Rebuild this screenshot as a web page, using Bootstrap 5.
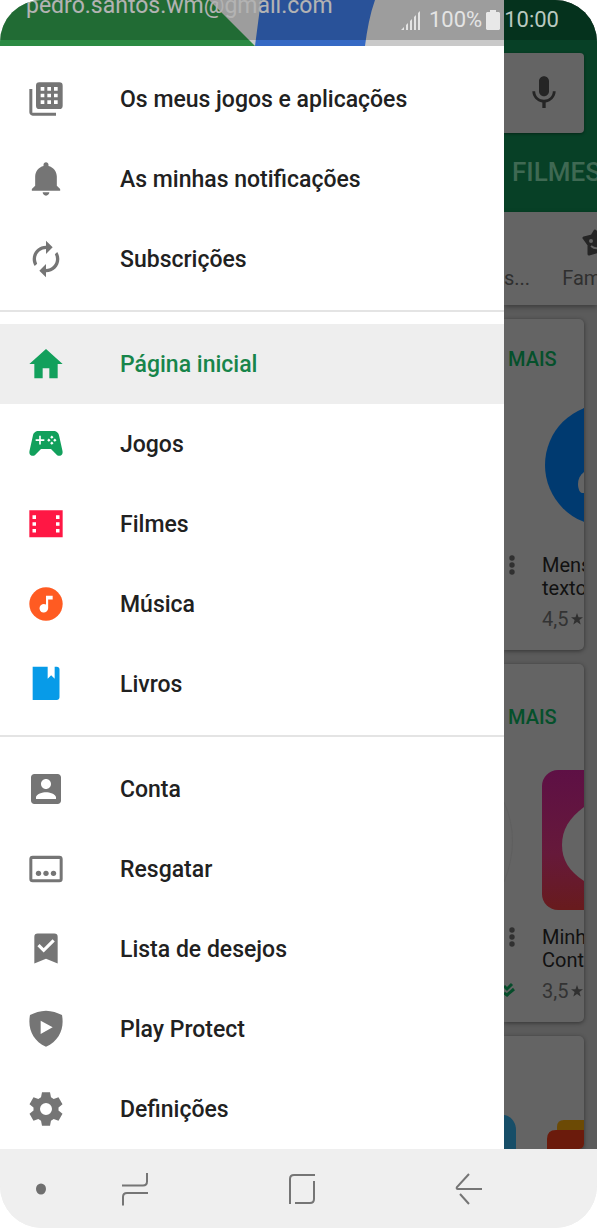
<!DOCTYPE html>
<html lang="pt">
<head>
<meta charset="utf-8">
<meta name="viewport" content="width=device-width, initial-scale=1">
<title>Menu da loja</title>
<link href="https://cdn.jsdelivr.net/npm/bootstrap@5.3.0/dist/css/bootstrap.min.css" rel="stylesheet">
<style>
  body { font-family: Roboto, "Liberation Sans", sans-serif; background: #fff; }
  .phone { border-radius: 42px; background: #efefef; }
  .status-bar { height: 40px; padding-right: 38px; background: rgba(0,0,0,.22); color: #e4e4e4; font-size: 22px; line-height: 40px; z-index: 3; }
  .status-bar time { color: #b9c9c0; }

  /* Navigation drawer */
  .drawer { background: #fff; min-width: 0; }
  .account { height: 46px; padding-left: 26px; }
  .account-art { inset: 0; }
  .account-mail { font-size: 23px; line-height: 12px; color: #e6e6e6; }
  .menu-group { padding: 0; margin: 0; list-style: none; }
  .menu-first { padding-top: 13px; }
  .menu-item { height: 80px; padding-left: 26px; gap: 54px; color: #212121; font-size: 23px; font-weight: 500; line-height: 32px; }
  .menu-item span { padding-top: 2px; }
  .menu-item.current { background: #eee; color: #17854a; }
  .menu-item svg { width: 40px; height: 40px; fill: #757575; flex: none; }
  .rule { height: 2px; background: #e4e4e4; margin: 11px 0 12px; }

  /* Dimmed store page beside the drawer */
  .store { width: 93px; background: #5b5b5b; color: #111; }
  .store-top { height: 212px; padding-top: 53px; background: #074026; }
  .search-end { width: 80px; height: 80px; background: #646464; border-radius: 0 4px 4px 0; box-shadow: 0 1px 3px rgba(0,0,0,.4); border: 0; padding: 0; }
  .store-tab { padding-left: 8px; font-size: 26px; font-weight: 500; line-height: 78px; color: #3f6953; text-decoration: none; }
  .shelf { height: 93px; background: #646464; color: #2f2f2f; font-size: 20px; line-height: 28px; box-shadow: 0 2px 5px rgba(0,0,0,.35); padding-top: 14px; gap: 32px; }
  .shelf a { padding-top: 38px; }
  .shelf a.with-icon { padding-top: 0; }
  .with-icon svg { display: block; margin: 0 0 6px 18px; }
  .tile { width: 80px; margin-top: 14px; background: #646464; border-radius: 0 5px 5px 0; box-shadow: 0 1px 4px rgba(0,0,0,.45); }
  .more { height: 79px; padding-left: 4px; font-size: 20px; font-weight: 500; color: #05502b; text-decoration: none; }
  .more-tall { height: 106px; }
  .tile-text { padding: 16px 0 19px; font-size: 20px; line-height: 23px; }
  .tile-side { width: 38px; flex: none; }
  .dots { border: 0; padding: 0 0 0 4px; background: none; line-height: 0; display: block; }
  .rating { padding-top: 7px; line-height: 24px; color: #333; gap: 3px; }

  /* System keys */
  .keys { height: 79px; background: #efefef; padding: 0 45px 0 36px; }
  .keys button { border: 0; background: none; padding: 0; line-height: 0; }
  .keys .pin { margin-right: 5px; }
  .keys svg { fill: none; stroke: #757575; stroke-width: 2; }
</style>
</head>
<body>
<div class="phone position-relative overflow-hidden d-flex flex-column min-vh-100">

  <div class="status-bar position-absolute top-0 start-0 end-0 d-flex align-items-center justify-content-end">
    <svg width="20" height="20" viewBox="0 0 20 20" fill="#e4e4e4"><path d="M0 20l3-3v3zM5 15l2-2v7H5zM9 11l2-2v11H9zM13 7l2-2v15h-2zM17 3l2-2v19h-2z"/></svg>
    <span class="ms-2 me-1">100%</span>
    <svg width="14" height="20" viewBox="0 0 14 20" fill="#e8e8e8"><path d="M4 0h6v2h3l1 1v16l-1 1H1l-1-1V3l1-1h3z"/></svg>
    <time class="ps-1">10:00</time>
  </div>

  <div class="d-flex flex-fill">
    <nav class="drawer flex-fill">
      <div class="account position-relative overflow-hidden">
        <svg class="account-art position-absolute w-100 h-100" viewBox="0 0 504 46" preserveAspectRatio="none">
          <path fill="#c9c9c9" d="M0 0h504v46H0z"/><path fill="#2b8a43" d="M0 0h209l46 46H0z"/><path fill="#3569c4" d="M261 0h114c-5 14-8 30-10 46H255z"/>
        </svg>
        <div class="account-mail position-relative">pedro.santos.wm@gmail.com</div>
      </div>

      <ul class="menu-group menu-first">
        <li><a href="#" class="menu-item d-flex align-items-center text-decoration-none">
          <svg viewBox="0 0 24 24"><path d="M3.800 6H2v14c0 1.100.9 2 2 2h14v-1.800H3.800z"/><path fill-rule="evenodd" d="M8 2h12a2 2 0 0 1 2 2v12a2 2 0 0 1-2 2H8a2 2 0 0 1-2-2V4a2 2 0 0 1 2-2zM8.800 4.800V7H11V4.800zm4 0V7H15V4.800zm4 0V7H19V4.800zM8.800 8.800V11H11V8.800zm4 0V11H15V8.800zm4 0V11H19V8.800zM8.800 12.800V15H11v-2.200zm4 0V15H15v-2.200zm4 0V15H19v-2.200z"/></svg><span>Os meus jogos e aplicações</span></a></li>
        <li><a href="#" class="menu-item d-flex align-items-center text-decoration-none">
          <svg viewBox="-.5 0 24 24"><path d="M11.500 22c1.100 0 2-.9 2-2h-4c0 1.100.9 2 2 2zm6.500-6v-5.500c0-3.070-2.130-5.640-5-6.320V3.500c0-.83-.67-1.500-1.500-1.500S10 2.670 10 3.500v.68c-2.870.68-5 3.250-5 6.320V16l-2 2v1h17v-1l-2-2z"/></svg><span>As minhas notificações</span></a></li>
        <li><a href="#" class="menu-item d-flex align-items-center text-decoration-none">
          <svg viewBox="0 0 24 24"><path d="M12 6v3l4-4-4-4v3c-4.420 0-8 3.580-8 8 0 1.570.46 3.030 1.240 4.260L6.700 14.800A5.870 5.870 0 0 1 6 12c0-3.310 2.690-6 6-6zm6.760 1.740L17.300 9.200c.44.84.7 1.790.7 2.800 0 3.310-2.690 6-6 6v-3l-4 4 4 4v-3c4.420 0 8-3.580 8-8 0-1.570-.46-3.030-1.240-4.260z"/></svg><span>Subscrições</span></a></li>
      </ul>
      <div class="rule"></div>
      <ul class="menu-group">
        <li><a href="#" class="menu-item current d-flex align-items-center text-decoration-none" aria-current="page">
          <svg viewBox="0 0 24 24"><path fill="#12a05c" d="M10 20.500V14.500h4v6h5v-8.500h3L12 3 2 12h3v8.500z"/></svg><span>Página inicial</span></a></li>
        <li><a href="#" class="menu-item d-flex align-items-center text-decoration-none">
          <svg viewBox="0 0 24 24"><path fill="#12a05c" d="M7.600 4.200h8.800c1.900 0 3.300 1.200 3.500 3l2 9c.3 1.600-.4 2.900-2 2.900-.8 0-1.200-.3-1.800-.9L15 15H9l-3.100 3.200c-.6.600-1 .9-1.800.9-1.600 0-2.300-1.300-2-2.900l2-9c.2-1.800 1.600-3 3.500-3z"/><path fill="#fff" d="M7.900 7.100h1v2.100H11v1H8.900v2.100h-1v-2.100H5.800v-1h2.100zM15.500 6.900l1 1-1 1-1-1zM15.500 10.500l1 1-1 1-1-1zM13.700 8.700l1 1-1 1-1-1zM17.300 8.700l1 1-1 1-1-1z"/></svg><span>Jogos</span></a></li>
        <li><a href="#" class="menu-item d-flex align-items-center text-decoration-none">
          <svg viewBox="0 0 24 24"><path fill="#ff1744" d="M2 3.700h20V20H2z"/><path fill="#fff" d="M3.900 6.800H6V9H3.900zM3.900 10.900H6V13H3.900zM3.900 15H6v2.100H3.900zM18 6.800h2.100V9H18zM18 10.900h2.100V13H18zM18 15h2.100v2.100H18z"/></svg><span>Filmes</span></a></li>
        <li><a href="#" class="menu-item d-flex align-items-center text-decoration-none">
          <svg viewBox="0 0 24 24"><circle fill="#ff5b22" cx="12" cy="12" r="10"/><path fill="#fff" d="M12 7h4v2.300h-2.700v5.300a2.600 2.600 0 1 1-1.300-2.300z"/></svg><span>Música</span></a></li>
        <li><a href="#" class="menu-item d-flex align-items-center text-decoration-none">
          <svg viewBox="0 0 24 24"><path fill="#079be8" d="M4 1.600h9v7.200l2.100-2.100 2.100 2.100V1.600h1.300c.9 0 1.600.7 1.600 1.600v16.800c0 .9-.7 1.600-1.600 1.600H4z"/></svg><span>Livros</span></a></li>
      </ul>
      <div class="rule"></div>
      <ul class="menu-group">
        <li><a href="#" class="menu-item d-flex align-items-center text-decoration-none">
          <svg viewBox="0 0 24 24"><path d="M3 5v14c0 1.100.89 2 2 2h14c1.100 0 2-.9 2-2V5c0-1.100-.9-2-2-2H5c-1.110 0-2 .9-2 2zm12 4c0 1.660-1.340 3-3 3s-3-1.340-3-3 1.340-3 3-3 3 1.340 3 3zm-9 8c0-2 4-3.100 6-3.100s6 1.100 6 3.100v1H6v-1z"/></svg><span>Conta</span></a></li>
        <li><a href="#" class="menu-item d-flex align-items-center text-decoration-none">
          <svg viewBox="0 0 24 24"><path fill-rule="evenodd" d="M4 4h16a2 2 0 0 1 2 2v12a2 2 0 0 1-2 2H4a2 2 0 0 1-2-2V6a2 2 0 0 1 2-2zm-.2 2v12.200h16.400V6z"/><circle cx="7.500" cy="14.600" r="1.600"/><circle cx="12" cy="14.600" r="1.600"/><circle cx="16.500" cy="14.600" r="1.600"/></svg><span>Resgatar</span></a></li>
        <li><a href="#" class="menu-item d-flex align-items-center text-decoration-none">
          <svg viewBox="0 0 24 24"><path d="M7 2.700h10a2 2 0 0 1 2 2v16l-7-2.900-7 2.900v-16a2 2 0 0 1 2-2z"/><path fill="none" stroke="#fff" stroke-width="1.900" d="M7.500 9.700l3.100 3.100 6-6"/></svg><span>Lista de desejos</span></a></li>
        <li><a href="#" class="menu-item d-flex align-items-center text-decoration-none">
          <svg viewBox="0 0 24 24"><path fill-rule="evenodd" d="M12 1c3.500.1 6.800 1.100 9.600 2.600 1.500 8.100-1.500 15.300-9.600 19.100C3.900 18.900.9 11.700 2.400 3.600 5.200 2.100 8.500 1.100 12 1zM8.800 7v8l7.200-4z"/></svg><span>Play Protect</span></a></li>
        <li><a href="#" class="menu-item d-flex align-items-center text-decoration-none">
          <svg viewBox="0 0 24 24"><path fill-rule="evenodd" d="M9.600 2h4.800l.6 3 1.600.95 2.900-1.050 2.400 4.200-2.400 2v1.800l2.400 2-2.400 4.200-2.900-1.050L15 19l-.6 3H9.600L9 19l-1.600-.95-2.900 1.050-2.400-4.200 2.400-2v-1.800l-2.400-2 2.400-4.200 2.900 1.050L9 5zM12 8.400a3.600 3.600 0 1 0 0 7.200 3.600 3.600 0 0 0 0-7.200z"/></svg><span>Definições</span></a></li>
      </ul>
    </nav>

    <main class="store flex-shrink-0 overflow-hidden d-flex flex-column">
      <header class="store-top overflow-hidden">
        <button class="search-end d-flex align-items-center justify-content-center" aria-label="Pesquisa por voz">
          <svg width="40" height="40" viewBox="0 0 24 24" fill="#252525"><path d="M12 14c1.660 0 3-1.340 3-3V5c0-1.660-1.340-3-3-3S9 3.340 9 5v6c0 1.660 1.340 3 3 3zm5.300-3c0 3-2.540 5.100-5.300 5.100S6.700 14 6.700 11H5c0 3.410 2.720 6.230 6 6.720V21h2v-3.280c3.280-.48 6-3.300 6-6.720h-1.700z"/></svg>
        </button>
        <a href="#" class="store-tab d-block">FILMES</a>
      </header>
      <div class="shelf d-flex flex-shrink-0">
        <a href="#" class="text-reset text-decoration-none">s...</a>
        <a href="#" class="with-icon text-reset text-decoration-none">
          <svg width="36" height="32" viewBox="0 0 36 32"><path fill="#252525" stroke="#252525" stroke-width="3" stroke-linejoin="round" d="M15 5l5 6 10-1-5 9 3 8-9-2-10 3v-9l-5-7 8-2z"/><path fill="none" stroke="#646464" stroke-width="2" d="M11 20q6 5 12-1"/><circle cx="11" cy="15" r="2" fill="#646464"/><circle cx="20" cy="15" r="2" fill="#646464"/></svg>Fam</a>
      </div>

      <article class="tile overflow-hidden flex-shrink-0">
        <a href="#" class="more d-flex align-items-center">MAIS</a>
        <svg class="d-block" width="80" height="140" viewBox="0 0 80 140"><circle cx="102" cy="67" r="61" fill="#003a70"/><path fill="#646464" d="M80 74c-4 3-6 7-6 12s2 9 4 9h2z"/></svg>
        <div class="tile-text d-flex">
          <div class="tile-side"><button class="dots" aria-label="Opções"><svg width="8" height="22" viewBox="0 0 8 22" fill="#303030"><circle cx="4" cy="4" r="2.700"/><circle cx="4" cy="11" r="2.700"/><circle cx="4" cy="18" r="2.700"/></svg></button></div>
          <div>Mens<br>texto
            <div class="rating d-flex align-items-center">4,5<svg width="12" height="12" viewBox="0 0 12 12" fill="#303030"><path d="M6 0l1.500 4.200H12L8.400 7l1.300 4.600L6 9l-3.700 2.600L3.600 7 0 4.200h4.500z"/></svg></div>
          </div>
        </div>
      </article>

      <article class="tile overflow-hidden flex-shrink-0">
        <a href="#" class="more more-tall d-flex align-items-center">MAIS</a>
        <svg class="d-block" width="80" height="140" viewBox="0 0 80 140">
          <defs><linearGradient id="pink" x1="0" y1="0" x2="0" y2="1"><stop offset="0" stop-color="#5e1045"/><stop offset=".6" stop-color="#66193a"/><stop offset="1" stop-color="#681b1d"/></linearGradient></defs>
          <path fill="none" stroke="#5f5f5f" d="M0 32q17 38 0 80"/><rect x="38" width="141" height="140" rx="16" fill="url(#pink)"/><path fill="#646464" d="M80 37C65 48 58 60 58 75s7 26 22 36z"/></svg>
        <div class="tile-text d-flex">
          <div class="tile-side d-flex flex-column justify-content-between align-items-start"><button class="dots" aria-label="Opções"><svg width="8" height="22" viewBox="0 0 8 22" fill="#303030"><circle cx="4" cy="4" r="2.700"/><circle cx="4" cy="11" r="2.700"/><circle cx="4" cy="18" r="2.700"/></svg></button>
            <svg width="12" height="22" viewBox="0 0 12 22"><path fill="none" stroke="#064c2a" stroke-width="3" d="M0 5l3 3 5-5M0 12l3 2 7-6"/></svg></div>
          <div>Minh<br>Cont
            <div class="rating d-flex align-items-center">3,5<svg width="12" height="12" viewBox="0 0 12 12" fill="#303030"><path d="M6 0l1.500 4.200H12L8.400 7l1.300 4.600L6 9l-3.700 2.600L3.600 7 0 4.200h4.500z"/></svg></div>
          </div>
        </div>
      </article>

      <article class="tile overflow-hidden flex-fill d-flex align-items-end">
        <svg class="d-block" width="80" height="35" viewBox="0 0 80 35"><path fill="#174e68" d="M0 1c7 1 12 7 12 15v19H0z"/><path fill="#6c4a05" d="M53 20v-7q0-7 7-7h20v14z"/><path fill="#6b1b0c" d="M43 35V25q0-9 9-9h28v19z"/></svg>
      </article>
    </main>
  </div>

  <footer class="keys d-flex align-items-center flex-shrink-0">
    <button class="pin" aria-label="Fixar"><svg width="10" height="12" viewBox="0 0 10 12"><ellipse cx="5" cy="6" rx="5" ry="5.500" fill="#6f6f6f" stroke="none"/></svg></button>
    <button class="flex-fill" aria-label="Recentes"><svg width="28" height="34" viewBox="0 0 28 34"><path d="M1 13.500h21q4 0 4-4V1M27 21H6q-4 0-4 4v8.500"/></svg></button>
    <button class="flex-fill" aria-label="Início"><svg width="28" height="34" viewBox="0 0 28 34"><path d="M2 32V7q0-4 4-4h21M26 9v18q0 4-4 4H7"/></svg></button>
    <button class="flex-fill" aria-label="Voltar"><svg width="28" height="34" viewBox="0 0 28 34"><path d="M14 2L2 15q-1 2 1 2h24M5 22l9 10"/></svg></button>
  </footer>
</div>
<script src="https://cdn.jsdelivr.net/npm/bootstrap@5.3.0/dist/js/bootstrap.bundle.min.js"></script>
</body>
</html>
